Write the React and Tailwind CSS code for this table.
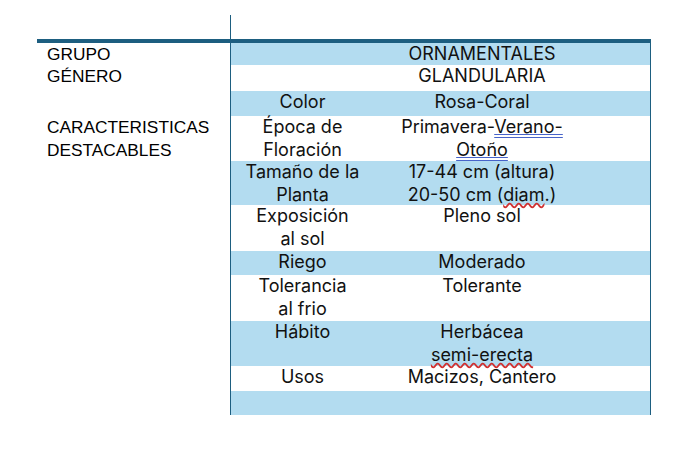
import React from 'react';

const wavy = 'relative z-10 underline decoration-wavy decoration-[#d03030] underline-offset-1';
const dbl = 'relative z-10 underline decoration-double decoration-[#4763c9] underline-offset-1';

const rows = [
	{ h: 'h-[22px]', label: 'GRUPO', attr: '', value: 'ORNAMENTALES', blue: true },
	{ h: 'h-[26px]', label: 'GÉNERO', attr: '', value: 'GLANDULARIA', blue: false },
	{ h: 'h-[25px]', label: '', attr: 'Color', value: 'Rosa-Coral', blue: true },
	{
		h: 'h-[45px]',
		label: ['CARACTERISTICAS', 'DESTACABLES'],
		attr: ['Época de', 'Floración'],
		value: (
			<>
				<span>
					Primavera-<span className={dbl}>Verano-</span>
				</span>
				<span className={dbl}>Otoño</span>
			</>
		),
		blue: false,
	},
	{
		h: 'h-[44px]',
		label: '',
		attr: ['Tamaño de la', 'Planta'],
		value: (
			<>
				<span>17-44 cm (altura)</span>
				<span>
					20-50 cm (<span className={wavy}>diam</span>.)
				</span>
			</>
		),
		blue: true,
	},
	{ h: 'h-[46px]', label: '', attr: ['Exposición', 'al sol'], value: 'Pleno sol', blue: false },
	{ h: 'h-[24px]', label: '', attr: 'Riego', value: 'Moderado', blue: true },
	{ h: 'h-[46px]', label: '', attr: ['Tolerancia', 'al frio'], value: 'Tolerante', blue: false },
	{
		h: 'h-[45px]',
		label: '',
		attr: 'Hábito',
		value: (
			<>
				<span>Herbácea</span>
				<span className={wavy}>semi-erecta</span>
			</>
		),
		blue: true,
	},
	{ h: 'h-[25px]', label: '', attr: 'Usos', value: 'Macizos, Cantero', blue: false },
	{ h: 'h-[24px]', label: '', attr: '', value: '', blue: true },
];

function Lines({ text }) {
	if (Array.isArray(text)) {
		return text.map((t) => <span key={t}>{t}</span>);
	}
	return text;
}

export default function App() {
	return (
		<div className="min-h-screen w-full bg-white pt-[15px] pl-[37px] text-black">
			<div className="w-[614px]">
				{/* top strip above the heading bar */}
				<div className="flex h-[24px]">
					<div className="w-[193px]" />
					<div className="border-l border-[#1d5e80]" />
				</div>
				<div className="h-[4px] bg-[#1d5e80]" />

				{rows.map((r, i) => (
					<div key={i} className={`flex ${r.h}`}>
						<div
							className="w-[193px] pl-[10px] flex flex-col text-[17.3px] leading-[23px]"
							style={{ fontFamily: '"Liberation Sans", Arial, sans-serif' }}
						>
							<Lines text={r.label} />
						</div>
						<div
							className={`flex-1 flex border-l border-r border-[#1d5e80] text-[18px] leading-[23px] text-[#111] ${r.blue ? 'bg-[#b3dcf0]' : 'bg-white'}`}
							style={{ fontFamily: 'Inter, "Noto Sans", sans-serif' }}
						>
							<div className="w-[143px] -mt-px flex flex-col items-center text-center">
								<Lines text={r.attr} />
							</div>
							<div className="w-[216px] -mt-px flex flex-col items-center text-center">{r.value}</div>
						</div>
					</div>
				))}
			</div>
		</div>
	);
}
